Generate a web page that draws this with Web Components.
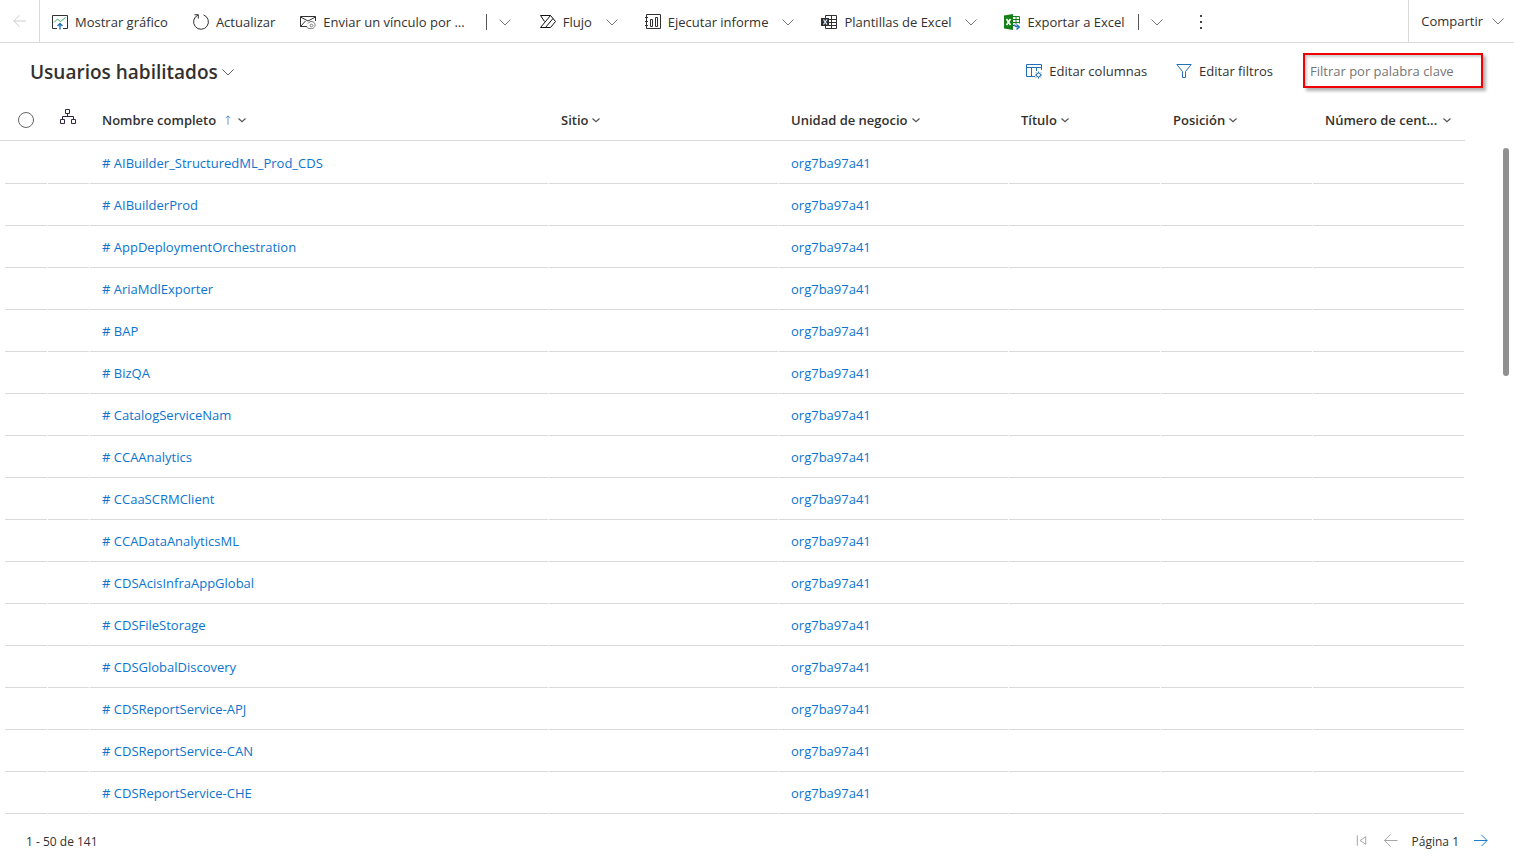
<!DOCTYPE html>
<html lang="es">
<head>
<meta charset="utf-8">
<meta name="viewport" content="width=device-width, initial-scale=1">
<title>Usuarios habilitados</title>
<style>
  body {
    margin: 0;
    background: #fff;
    color: #323130;
    font-family: "Open Sans", "Noto Sans", sans-serif;
    font-size: 13px;
    line-height: 20px;
    --color-link: #0b74cf;
    --color-line: #d9d9d9;
  }
</style>
</head>
<body>
<users-page></users-page>

<script>
const ICONS = {
  back: '<path d="M15.500 8H1.500M8 1.500L1.500 8L8 14.500"/>',
  forward: '<path d="M1 8H15M9 2L15 8L9 14"/>',
  first: '<path d="M3.500 2.500V13.500M12.500 4V12L6.500 8Z"/>',
  chevron: '<path d="M2.500 5.500L8 11L13.500 5.500"/>',
  smallChevron: '<path stroke="#555" stroke-width="1.200" d="M4.500 6.500L8 9.800L11.500 6.500"/>',
  sortUp: '<path stroke="#2b7bc0" d="M8 14.500V2.500M5 5.500L8 2.500L11 5.500"/>',
  chart: `
    <path d="M5 14.500H.5V1.500H15.500V14.500H11"/>
    <path stroke="#3fae6a" d="M2 8.500L5.500 5L8.500 7.500L13.500 3.500"/>
    <path stroke="#2470b8" stroke-width="1.400" d="M8 15.500V9.500M5.500 12L8 9.500L10.500 12"/>`,
  refresh: '<path d="M10.500 .9A7.400 7.400 0 1 1 5 1.100M1.500 .7H5.300V4.500"/>',
  mail: `
    <path d="M7 12.500H.5V2.500H15.500V7M.5 3L8 7L15.500 3M.5 12.500L5.500 7"/>
    <path stroke="#777" d="M8 9.500C10 6.500 14.500 7 15 10.500C15.500 14 12 15 9.500 14.500M13 11.500C12.500 9.500 10 10 10 11.500C10 13 12.500 13.500 13 11.500M7 12.500C7 14 8.500 14.800 10.500 14.500"/>`,
  flow: '<path stroke="#111" d="M.5 1.500H10.500L15.500 7.500L10.500 13.500H.5L10.500 1.500M.5 1.500L4.500 7.500M13 4.500L5.500 13.500"/>',
  report: '<path d="M1.500 .5H15.500V14.500H1.500ZM0 3.500H3M0 7.500H3M0 11.500H3M5.500 5.500H7.500V12.500H5.500ZM10.500 3.500H12.500V12.500H10.500Z"/>',
  template: `
    <path d="M4.500 1.500H15.500V14.500H4.500ZM4 5.500H15.500M4 8.500H15.500M4 11.500H15.500M10.500 1.500V14.500"/>
    <path fill="#323130" stroke="none" d="M0 4H8V12H0Z"/>
    <path stroke="#d8ecff" stroke-width="1.300" d="M2.500 5.500L6 10.500M6 5.500L2.500 10.500"/>`,
  excel: `
    <path stroke="#168018" d="M8 2.500H15.500V9.500M8 5.500H15M8 8.500H15M8 11.500H10.500M12 2V10"/>
    <path fill="#168018" stroke="none" d="M0 1.500L9 0V16L0 14.500Z"/>
    <path stroke="#fff" stroke-width="1.600" d="M2.500 5L6.500 11M6.500 5L2.500 11"/>
    <path stroke="#2470b8" stroke-width="1.400" d="M10.500 10.500Q10.500 13 15 13M12.500 10.500L15.300 13L12.500 15.500"/>`,
  columns: `
    <path stroke="#2470b8" d="M9 13.500H.5V1.500H15.500V7M.5 4.500H15.500M5.500 4.500V13.500M10.500 4.500V8"/>
    <circle stroke="#2470b8" cx="12.500" cy="12" r="2"/>
    <path stroke="#2470b8" d="M12.500 8.500V10M12.500 14V15.500M9 12H10.500M14.500 12H16M10 9.500L11 10.500M14 13.500L15 14.500M15 9.500L14 10.500M10 14.500L11 13.500"/>`,
  filter: '<path stroke="#2470b8" d="M.8 1.500H15.200L9.500 8.500V14.500H6.500V8.500Z"/>',
  hierarchy: '<path stroke="#32253f" d="M5.500 .5H9.500V4.500H5.500ZM7.500 4.500V7.500M2.500 10.500V7.500H13.500V10.500M.5 10.500H4.500V14.500H.5ZM11.500 10.500H15.500V14.500H11.500Z"/>',
  more: '<path fill="#444" stroke="none" d="M7 1H9V3H7ZM7 7H9V9H7ZM7 13H9V15H7Z"/>'
};

class UiIcon extends HTMLElement {
  constructor() {
    super();
    this.attachShadow({ mode: 'open' });
  }

  connectedCallback() {
    this.shadowRoot.innerHTML = `
      <style>
        :host { display: inline-block; flex: none; width: 16px; height: 16px; }
        svg { display: block; width: 100%; height: 100%; overflow: visible; }
      </style>
      <svg viewBox="0 0 16 16" fill="none" stroke="currentColor" aria-hidden="true">
        ${ICONS[this.getAttribute('name')]}
      </svg>
    `;
  }
}

class CommandButton extends HTMLElement {
  constructor() {
    super();
    this.attachShadow({ mode: 'open' });
  }

  connectedCallback() {
    const icon = this.getAttribute('icon');
    const menu = this.getAttribute('menu');
    this.shadowRoot.innerHTML = `
      <style>
        :host { display: flex; align-items: stretch; flex: none; }
        button {
          display: flex;
          align-items: center;
          gap: 7px;
          padding: 0 13px 0 12px;
          border: 0;
          background: none;
          color: inherit;
          font: inherit;
          white-space: nowrap;
          cursor: pointer;
        }
        button:hover { background: #f3f2f1; }
        .near { padding-right: 8px; }
        .more { padding: 0 15px 0 10px; }
        .chevron { color: #777; }
        .inline { margin-left: 5px; }
        .split {
          align-self: center;
          width: 1px;
          height: 16px;
          margin-left: var(--split-gap, 0);
          background: #555;
        }
      </style>
      <button type="button" class="${menu === 'near' ? 'near' : ''}">
        ${icon ? `<ui-icon name="${icon}"></ui-icon>` : ''}
        <slot></slot>
        ${menu === 'inline' ? '<ui-icon class="chevron inline" name="chevron"></ui-icon>' : ''}
        ${menu === 'near' ? '<ui-icon class="chevron" name="chevron"></ui-icon>' : ''}
      </button>
      ${menu === 'split' ? `
        <span class="split"></span>
        <button type="button" class="more" aria-label="Más opciones"><ui-icon class="chevron" name="chevron"></ui-icon></button>
      ` : ''}
    `;
  }
}

class CommandBar extends HTMLElement {
  constructor() {
    super();
    this.attachShadow({ mode: 'open' });
    this.shadowRoot.innerHTML = `
      <style>
        :host {
          display: flex;
          height: 42px;
          border-bottom: 1px solid var(--color-line);
        }
        .back {
          display: flex;
          align-items: center;
          padding: 0 12px;
          border: 0;
          border-right: 1px solid var(--color-line);
          background: none;
          color: #c8c6c4;
        }
        .back ui-icon { width: 15px; height: 14px; }
        .commands {
          display: flex;
          flex: 1;
          min-width: 0;
          box-sizing: border-box;
          padding-top: 2px;
          overflow: hidden;
        }
        .more { display: flex; align-items: center; padding: 0 13px; border: 0; background: none; }
        .share { display: flex; border-left: 1px solid var(--color-line); }
      </style>
      <button class="back" type="button" aria-label="Atrás" disabled><ui-icon name="back"></ui-icon></button>
      <div class="commands">
        <slot></slot>
        <button class="more" type="button" aria-label="Más comandos"><ui-icon name="more"></ui-icon></button>
      </div>
      <div class="share"><slot name="share"></slot></div>
    `;
  }
}

class ViewHeader extends HTMLElement {
  constructor() {
    super();
    this.attachShadow({ mode: 'open' });
    this.shadowRoot.innerHTML = `
      <style>
        :host {
          display: flex;
          align-items: center;
          justify-content: space-between;
          padding: 10px 31px 11px 30px;
        }
        h1 { margin: 0; padding-top: 2px; font-size: 19px; line-height: 28px; font-weight: 600; }
        h1 button {
          display: flex;
          align-items: center;
          gap: 2px;
          padding: 0;
          border: 0;
          background: none;
          color: inherit;
          font: inherit;
        }
        h1 ui-icon { color: #605e5c; }
        .tools { display: flex; align-items: center; gap: 4px; }
        input {
          box-sizing: border-box;
          width: 180px;
          height: 35px;
          margin-left: 13px;
          padding: 0 5px;
          border: 2px solid #f00000;
          background: #fff;
          box-shadow: 3px 3px 3px rgba(0,0,0,0.3), inset 2px 2px 3px rgba(0,0,0,0.2);
          color: inherit;
          font: inherit;
          outline: 0;
        }
        input::placeholder { color: #767574; opacity: 1; }
      </style>
      <h1><button type="button"><slot></slot><ui-icon name="chevron"></ui-icon></button></h1>
      <div class="tools">
        <command-button icon="columns">Editar columnas</command-button>
        <command-button icon="filter">Editar filtros</command-button>
        <input type="text" aria-label="Filtrar por palabra clave" placeholder="Filtrar por palabra clave">
      </div>
    `;
  }
}

class UserGrid extends HTMLElement {
  constructor() {
    super();
    this.attachShadow({ mode: 'open' });
  }

  set users(list) {
    const headers = ['Sitio', 'Unidad de negocio', 'Título', 'Posición', 'Número de cent...'];

    this.shadowRoot.innerHTML = `
      <style>
        :host { display: flex; align-items: flex-start; }
        table {
          flex: 1;
          min-width: 0;
          table-layout: fixed;
          border-collapse: separate;
          border-spacing: 0;
        }
        .pick { width: 48px; }
        .tree { width: 42px; }
        .wide { width: 230px; }
        .narrow { width: 152px; }
        th {
          height: 41px;
          padding: 0 0 0 12px;
          border-bottom: 1px solid var(--color-line);
          text-align: left;
          font-weight: 600;
        }
        th:first-child { padding-left: 18px; }
        th ui-icon { width: 16px; height: 16px; }
        th button {
          display: flex;
          align-items: center;
          padding: 0;
          border: 0;
          background: none;
          color: inherit;
          font: inherit;
          white-space: nowrap;
        }
        th .sort { width: 12px; margin-left: 6px; }
        .far { gap: 2px; }
        input {
          display: block;
          appearance: none;
          width: 16px;
          height: 16px;
          margin: 0;
          border: 1px solid #666;
          border-radius: 50%;
        }
        /* row rules stop one pixel short of each column edge */
        td {
          height: 42px;
          padding: 0 0 0 12px;
          background: linear-gradient(var(--color-line), var(--color-line)) left bottom / calc(100% - 1px) 1px no-repeat;
        }
        td:first-child {
          background-position: right 1px bottom;
          background-size: calc(100% - 6px) 1px;
        }
        tbody tr:first-child td { height: 43px; }
        tbody tr:hover a { text-decoration: underline; }
        a { color: var(--color-link); text-decoration: none; }
        .rail { flex: none; padding: 49px 5px 0 38px; }
        .thumb { width: 6px; height: 228px; border-radius: 3px; background: #909090; }
      </style>
      <table>
        <colgroup>
          <col class="pick"><col class="tree"><col>
          <col class="wide"><col class="wide">
          <col class="narrow"><col class="narrow"><col class="narrow">
        </colgroup>
        <thead>
          <tr>
            <th><input type="checkbox" aria-label="Seleccionar todo"></th>
            <th><ui-icon name="hierarchy"></ui-icon></th>
            <th><button type="button">Nombre completo<ui-icon class="sort" name="sortUp"></ui-icon><ui-icon name="smallChevron"></ui-icon></button></th>
            ${headers.map((text) => `
              <th><button type="button" class="${text.endsWith('...') ? 'far' : ''}">${text}<ui-icon name="smallChevron"></ui-icon></button></th>
            `).join('')}
          </tr>
        </thead>
        <tbody>
          ${list.map((name) => `
            <tr>
              <td></td><td></td>
              <td><a href="#"># ${name}</a></td>
              <td></td>
              <td><a href="#">org7ba97a41</a></td>
              <td></td><td></td><td></td>
            </tr>
          `).join('')}
        </tbody>
      </table>
      <div class="rail"><div class="thumb"></div></div>
    `;
  }
}

class PagerBar extends HTMLElement {
  constructor() {
    super();
    this.attachShadow({ mode: 'open' });
    this.shadowRoot.innerHTML = `
      <style>
        :host {
          display: flex;
          align-items: center;
          justify-content: space-between;
          padding: 18px 26px 0 26px;
          font-size: 12px;
        }
        nav { display: flex; align-items: center; gap: 14px; }
        button { display: flex; padding: 0 0 4px; border: 0; background: none; color: var(--color-link); }
        button:disabled { color: #a19f9d; }
        ui-icon { width: 15px; height: 15px; }
      </style>
      <slot></slot>
      <nav aria-label="Paginación">
        <button type="button" aria-label="Primera página" disabled><ui-icon name="first"></ui-icon></button>
        <button type="button" aria-label="Página anterior" disabled><ui-icon name="back"></ui-icon></button>
        <span>Página 1</span>
        <button type="button" aria-label="Página siguiente"><ui-icon name="forward"></ui-icon></button>
      </nav>
    `;
  }
}

class UsersPage extends HTMLElement {
  constructor() {
    super();
    this.attachShadow({ mode: 'open' });
    this.shadowRoot.innerHTML = `
      <style>
        :host { display: block; }
        .link { --split-gap: 8px; }
      </style>
      <command-bar>
        <command-button icon="chart">Mostrar gráfico</command-button>
        <command-button icon="refresh">Actualizar</command-button>
        <command-button class="link" icon="mail" menu="split">Enviar un vínculo por ...</command-button>
        <command-button icon="flow" menu="inline">Flujo</command-button>
        <command-button icon="report" menu="inline">Ejecutar informe</command-button>
        <command-button icon="template" menu="inline">Plantillas de Excel</command-button>
        <command-button icon="excel" menu="split">Exportar a Excel</command-button>
        <command-button slot="share" menu="near">Compartir</command-button>
      </command-bar>
      <view-header>Usuarios habilitados</view-header>
      <user-grid></user-grid>
      <pager-bar>1 - 50 de 141</pager-bar>
    `;
    this.shadowRoot.querySelector('user-grid').users = [
      'AIBuilder_StructuredML_Prod_CDS',
      'AIBuilderProd',
      'AppDeploymentOrchestration',
      'AriaMdlExporter',
      'BAP',
      'BizQA',
      'CatalogServiceNam',
      'CCAAnalytics',
      'CCaaSCRMClient',
      'CCADataAnalyticsML',
      'CDSAcisInfraAppGlobal',
      'CDSFileStorage',
      'CDSGlobalDiscovery',
      'CDSReportService-APJ',
      'CDSReportService-CAN',
      'CDSReportService-CHE'
    ];
  }
}

customElements.define('ui-icon', UiIcon);
customElements.define('command-button', CommandButton);
customElements.define('command-bar', CommandBar);
customElements.define('view-header', ViewHeader);
customElements.define('user-grid', UserGrid);
customElements.define('pager-bar', PagerBar);
customElements.define('users-page', UsersPage);
</script>
</body>
</html>
